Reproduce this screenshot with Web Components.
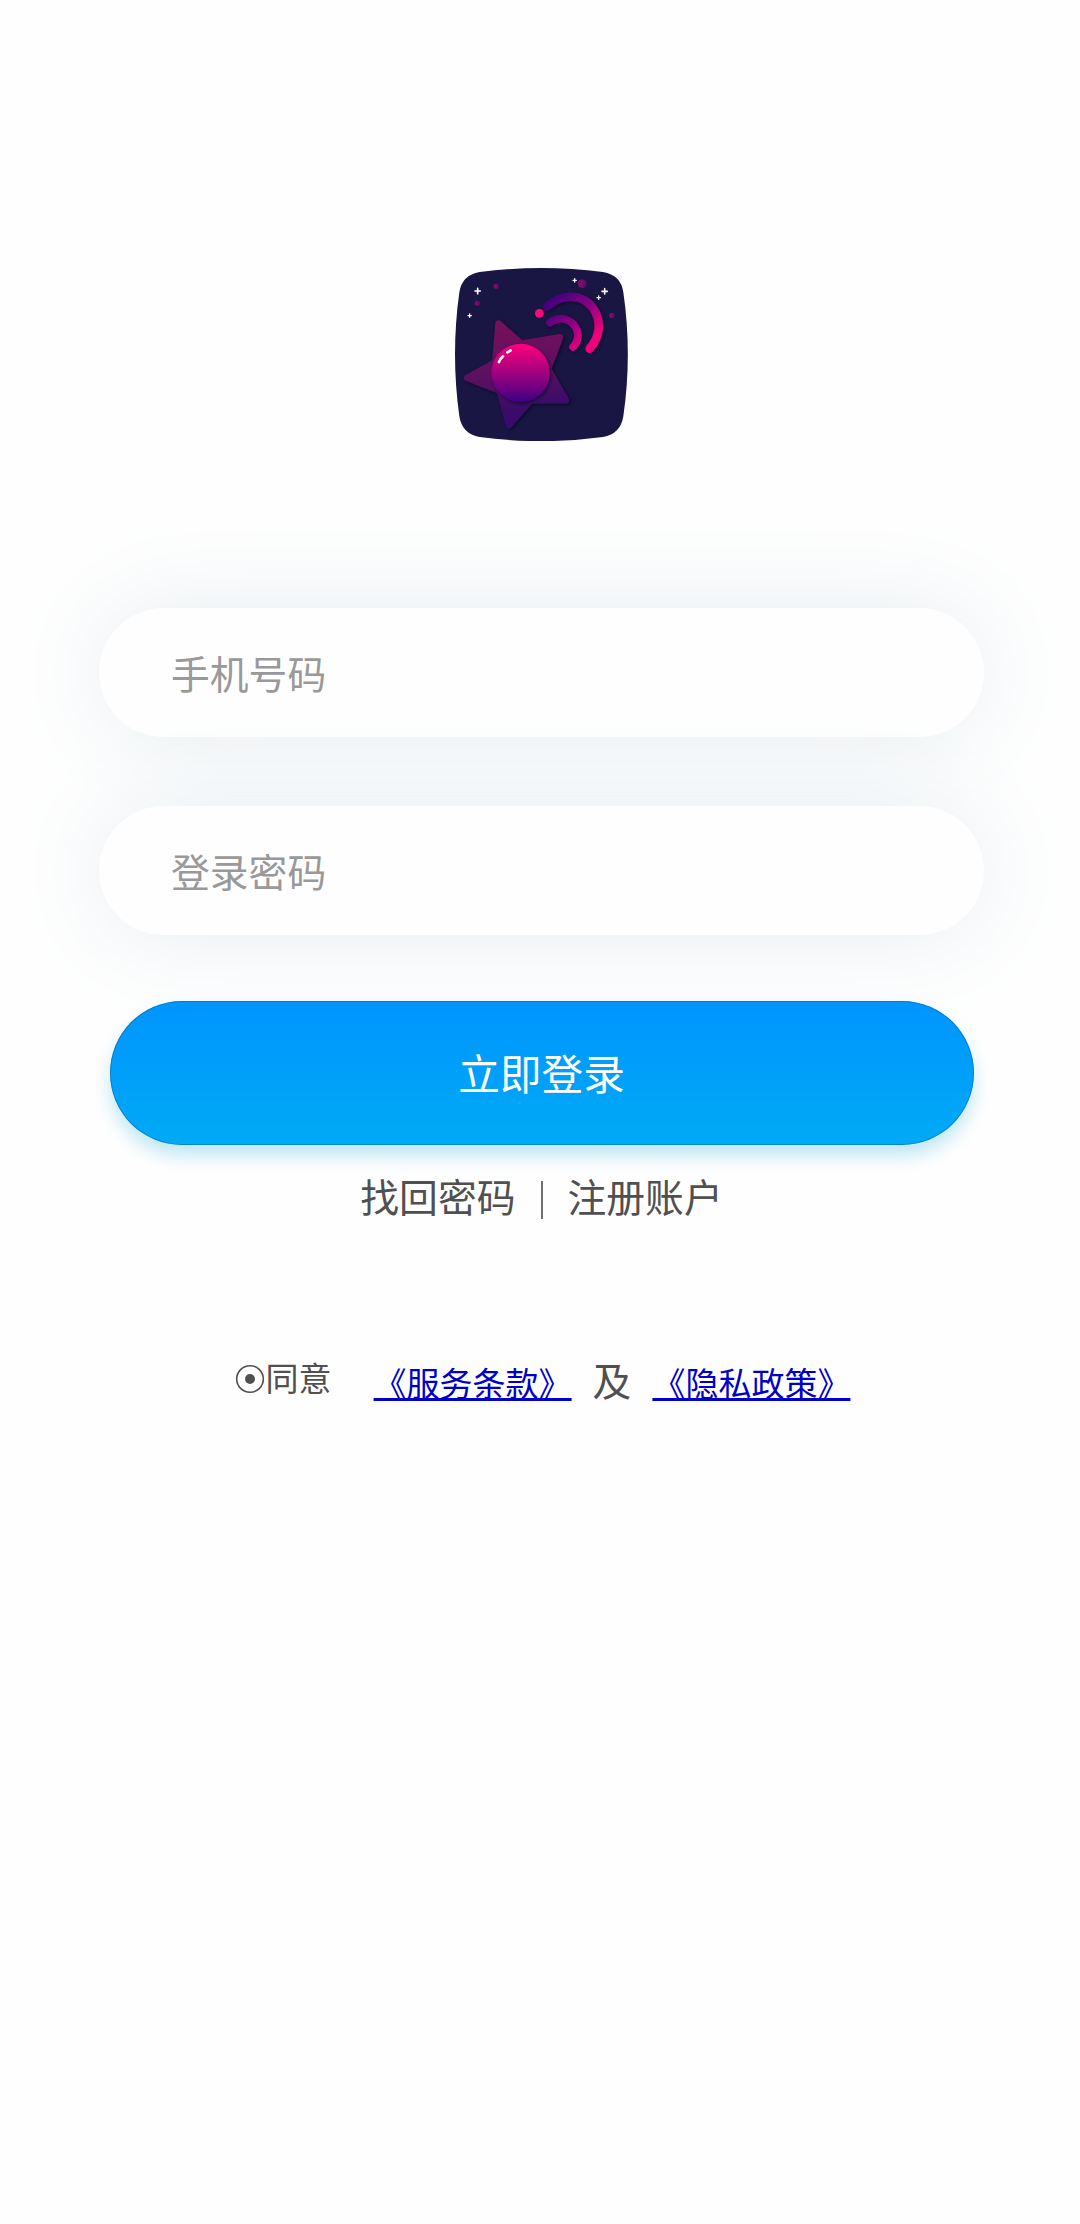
<!DOCTYPE html>
<html lang="zh-CN">
<head>
  <meta charset="utf-8">
  <title>登录</title>
  <style>
    body {
      margin: 0;
      background: #fefefe;
      color: #505050;
      font-family: "Noto Sans CJK SC", sans-serif;
    }
  </style>
</head>
<body>
  <login-page>
    <app-logo slot="logo"></app-logo>
    <login-field placeholder="手机号码"></login-field>
    <login-field placeholder="登录密码" type="password"></login-field>
    <login-button slot="actions">立即登录</login-button>
    <account-links slot="actions">
      <span>找回密码</span>
      <span slot="end">注册账户</span>
    </account-links>
    <user-agreement slot="actions"></user-agreement>
  </login-page>

  <script>
    class LoginPage extends HTMLElement {
      constructor() {
        super();
        this.attachShadow({ mode: 'open' }).innerHTML = `
          <style>
            :host {
              display: flex;
              flex-direction: column;
              align-items: center;
              box-sizing: border-box;
              min-height: 2224px;
              padding-top: 268px;
            }

            .fields {
              display: flex;
              flex-direction: column;
              gap: 69px;
              width: 885px;
              margin: 167px 0 66px 3px;
            }

            .actions {
              display: flex;
              flex-direction: column;
              align-items: center;
              padding-left: 4px;
            }
          </style>

          <slot name="logo"></slot>
          <div class="fields"><slot></slot></div>
          <div class="actions"><slot name="actions"></slot></div>
        `;
      }
    }

    class AppLogo extends HTMLElement {
      constructor() {
        super();
        this.attachShadow({ mode: 'open' }).innerHTML = `
          <style>
            :host {
              display: block;
              width: 173px;
              height: 173px;
              margin-left: 3px;
            }

            svg {
              display: block;
              width: 100%;
              height: 100%;
            }
          </style>

          <svg viewBox="45 39 519 519">
            <defs>
              <linearGradient id="ball" x1="0" y1="0" x2="0" y2="1">
                <stop offset="0.05" stop-color="#f6007b"/>
                <stop offset="0.5" stop-color="#a00080"/>
                <stop offset="1" stop-color="#3c0080"/>
              </linearGradient>
              <linearGradient id="star" gradientUnits="userSpaceOnUse" x1="210" y1="200" x2="250" y2="520">
                <stop offset="0" stop-color="#77105c"/>
                <stop offset="0.5" stop-color="#5b1060"/>
                <stop offset="0.8" stop-color="#3a0c68"/>
                <stop offset="1" stop-color="#330b70"/>
              </linearGradient>
              <linearGradient id="wave" gradientUnits="userSpaceOnUse" x1="325" y1="140" x2="460" y2="280">
                <stop offset="0" stop-color="#43007f"/>
                <stop offset="0.45" stop-color="#85007e"/>
                <stop offset="0.9" stop-color="#f2007c"/>
              </linearGradient>
              <linearGradient id="dot">
                <stop offset="0.3" stop-color="#8b0866"/>
                <stop offset="1" stop-color="#46106a"/>
              </linearGradient>
              <filter id="shade" x="-20%" y="-20%" width="150%" height="150%" color-interpolation-filters="sRGB">
                <feDropShadow dx="4" dy="4" stdDeviation="5" flood-color="#05051c" flood-opacity="0.7"/>
              </filter>
            </defs>

            <path fill="#191644" d="M119 51Q304 27 489 51Q543 60 550 112Q577 298 550 484Q542 537 489 546Q304 571 119 546Q66 537 58 484Q32 298 58 112Q66 60 119 51Z"/>

            <g filter="url(#shade)">
              <path fill="url(#star)" stroke="url(#star)" stroke-width="20" stroke-linejoin="round" d="M176 206L244 266L360 247L324 342L378 436L272 436L207 511L180 408L82 369L166 322Z"/>
            </g>
            <g filter="url(#shade)">
              <circle cx="242" cy="354" r="88" fill="url(#ball)"/>
            </g>
            <path fill="none" stroke="#fff" stroke-width="8" stroke-linecap="round" d="M177 321Q181 311 189 304M202 292L212 286"/>

            <g fill="none" stroke="url(#wave)" stroke-linecap="round" filter="url(#shade)">
              <path stroke-width="26" d="M322 154C365 116 425 115 458 158C486 196 481 245 449 281"/>
              <path stroke-width="23" d="M330 203C359 181 393 193 408 219C419 240 414 260 399 276"/>
            </g>
            <circle cx="298" cy="175" r="13" fill="#fb087c"/>

            <g fill="url(#dot)">
              <circle cx="169" cy="94" r="8"/>
              <circle cx="112" cy="145" r="8"/>
              <circle cx="427" cy="86" r="13"/>
              <circle cx="516" cy="181" r="8"/>
            </g>
            <g stroke="#fff" stroke-linecap="round">
              <path stroke-width="5" d="M113 100V116M105 108H121M494 101V117M486 109H502"/>
              <path stroke-width="4" d="M89 177V187M84 182H94M404 71V81M399 76H409M476 123V133M471 128H481"/>
            </g>
          </svg>
        `;
      }
    }

    class LoginField extends HTMLElement {
      connectedCallback() {
        this.attachShadow({ mode: 'open' }).innerHTML = `
          <style>
            :host {
              display: block;
              height: 129px;
              border-radius: 65px;
              background: #fefefe;
              box-shadow: 0 0 100px #e8eef2;
            }

            input {
              box-sizing: border-box;
              width: 100%;
              height: 100%;
              padding: 0 72px 2px;
              border: none;
              outline: none;
              background: none;
              font: 38.8px "Noto Sans CJK SC", sans-serif;
            }

            input::placeholder {
              color: #999;
            }
          </style>

          <input type="${this.getAttribute('type') || 'text'}" placeholder="${this.getAttribute('placeholder')}">
        `;
      }
    }

    class LoginButton extends HTMLElement {
      constructor() {
        super();
        this.attachShadow({ mode: 'open' }).innerHTML = `
          <style>
            :host {
              display: block;
            }

            button {
              display: block;
              box-sizing: border-box;
              width: 864px;
              height: 144px;
              padding: 0 1px 3px 0;
              border: none;
              border-radius: 72px;
              background: linear-gradient(#0095ff, #00aaf5);
              box-shadow: 0 11px 17px rgba(0, 160, 215, 0.24), inset 0 0 0 1px rgba(0, 90, 150, 0.45);
              color: #fff;
              font: 41.7px "Noto Sans CJK SC", sans-serif;
            }
          </style>

          <button type="submit"><slot></slot></button>
        `;
      }
    }

    class AccountLinks extends HTMLElement {
      constructor() {
        super();
        this.attachShadow({ mode: 'open' }).innerHTML = `
          <style>
            :host {
              display: flex;
              align-items: center;
              justify-content: center;
              gap: 25px;
              height: 58px;
              margin: 21px 1px 0 0;
              font-size: 38.8px;
              line-height: 58px;
            }

            i {
              width: 2px;
              height: 38px;
              margin-top: 9px;
              background: #707070;
            }
          </style>

          <slot></slot>
          <i></i>
          <slot name="end"></slot>
        `;
      }
    }

    class UserAgreement extends HTMLElement {
      constructor() {
        super();
        this.attachShadow({ mode: 'open' }).innerHTML = `
          <style>
            :host {
              display: flex;
              align-items: flex-start;
              margin: 129px 0 0 1px;
              font-size: 33px;
              line-height: 48px;
            }

            svg {
              width: 30px;
              height: 30px;
              margin: 11px 1px 0 0;
            }

            a {
              margin-top: 5px;
              color: #0000c8;
              text-decoration: underline;
              text-decoration-thickness: 3px;
              text-underline-offset: 2px;
              text-decoration-skip-ink: none;
            }

            .agree {
              margin-right: 42px;
            }

            .and {
              margin: 2px 21px 0;
              font-size: 38.8px;
            }
          </style>

          <svg viewBox="0 0 30 30">
            <circle cx="15" cy="15" r="13.3" fill="none" stroke="#505050" stroke-width="1.6"/>
            <circle cx="15" cy="15" r="5" fill="#505050"/>
          </svg>
          <span class="agree">同意</span>
          <a href="#">《服务条款》</a>
          <span class="and">及</span>
          <a href="#">《隐私政策》</a>
        `;
      }
    }

    customElements.define('login-page', LoginPage);
    customElements.define('app-logo', AppLogo);
    customElements.define('login-field', LoginField);
    customElements.define('login-button', LoginButton);
    customElements.define('account-links', AccountLinks);
    customElements.define('user-agreement', UserAgreement);
  </script>
</body>
</html>
